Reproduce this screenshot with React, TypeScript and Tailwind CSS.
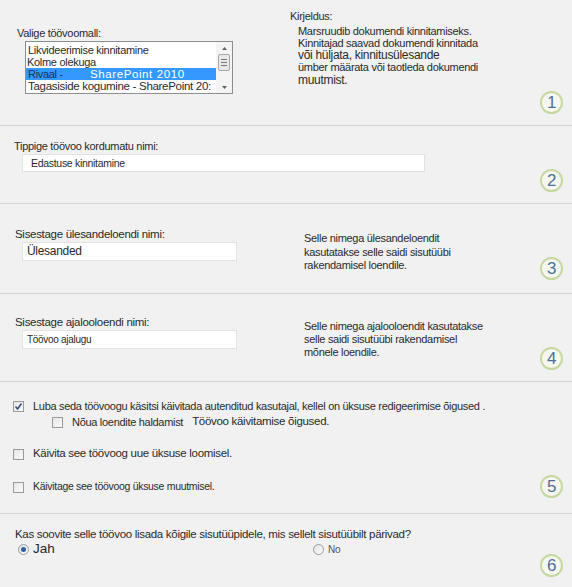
import React from 'react';

const font = { fontFamily: '"Liberation Sans", Arial, sans-serif' };

const Step: React.FC<{ n: number; pb: string }> = ({ n, pb }) => (
  <div className={`flex flex-col justify-end pr-[9px] ${pb}`}>
    <div className="w-[23px] h-[23px] rounded-full border-2 border-[#c6d79f] bg-[#f6f8f0] flex items-center justify-center text-[17px] leading-none text-[#4d6f9c]">
      {n}
    </div>
  </div>
);

const Box: React.FC<{ checked?: boolean }> = ({ checked }) => (
  <span className="w-[11px] h-[11px] border border-[#9a9a9a] bg-gradient-to-br from-[#e6e6e6] to-[#fafafa] flex items-center justify-center shrink-0">
    {checked && (
      <svg width="9" height="9" viewBox="0 0 9 9">
        <path d="M1.5 4.5 L3.6 7 L7.5 1.5" fill="none" stroke="#3a4f7a" strokeWidth="1.6" />
      </svg>
    )}
  </span>
);

const Radio: React.FC<{ on?: boolean }> = ({ on }) => (
  <span className="w-[11px] h-[11px] rounded-full border border-[#9a9a9a] bg-gradient-to-br from-[#e2e2e2] to-[#fbfbfb] flex items-center justify-center shrink-0">
    {on && <span className="w-[5px] h-[5px] rounded-full bg-[#2f5f9f]" />}
  </span>
);

export default function App() {
  return (
    <div className="w-[572px] h-[587px] bg-[#f1f1f1] text-[#2a2a2a] text-[11px] tracking-[-0.3px] flex flex-col overflow-hidden" style={font}>
      {/* 1 */}
      <div className="h-[126px] flex border-b border-[#d6d6d6] shrink-0">
        <div className="flex-1 flex">
          <div className="w-[290px] pl-[17px] pt-[27px]">
            <div className="leading-[13px]">Valige töövoomall:</div>
            <div className="ml-[8px] mt-[1px] w-[208px] h-[53px] border border-[#8a8f96] bg-white flex">
              <div className="flex-1 pt-[2px] leading-[12px] whitespace-nowrap overflow-hidden">
                <div className="pl-[2px]">Likvideerimise kinnitamine</div>
                <div className="pl-[1px]">Kolme olekuga</div>
                <div className="pl-[2px] bg-[#3399ff] text-[#1c2f55] flex h-[12px]">
                  <span className="w-[62px]">Rivaal -</span>
                  <span className="text-white tracking-[0.6px] text-[11.5px]">SharePoint 2010</span>
                </div>
                <div className="pl-[2px] text-[11.5px]">Tagasiside kogumine - SharePoint 20:</div>
              </div>
              <div className="w-[16px] bg-[#f4f4f4] flex flex-col items-center">
                <svg width="9" height="12" viewBox="0 0 9 12"><path d="M2 8 L4.5 5 L7 8Z" fill="#606060" /></svg>
                <div className="w-[12px] h-[17px] border border-[#a8a8a8] rounded-[2px] bg-[#e8e8e8] flex flex-col items-center justify-center gap-[2px]">
                  <span className="w-[6px] h-px bg-[#777]" />
                  <span className="w-[6px] h-px bg-[#777]" />
                  <span className="w-[6px] h-px bg-[#777]" />
                </div>
                <div className="flex-1" />
                <svg width="9" height="10" viewBox="0 0 9 10"><path d="M2 3 L4.5 6 L7 3Z" fill="#606060" /></svg>
              </div>
            </div>
          </div>
          <div className="pt-[10px] leading-[12px]">
            <div>Kirjeldus:</div>
            <div className="pl-[8px] pt-[3px]">
              <div className="leading-[12px]">Marsruudib dokumendi kinnitamiseks.</div>
              <div className="leading-[12px]">Kinnitajad saavad dokumendi kinnitada</div>
              <div className="leading-[12px] text-[12px]">või hüljata, kinnitusülesande</div>
              <div className="leading-[13px]">ümber määrata või taotleda dokumendi</div>
              <div className="leading-[13px] text-[12px]">muutmist.</div>
            </div>
          </div>
        </div>
        <Step n={1} pb="pb-[11px]" />
      </div>

      {/* 2 */}
      <div className="h-[78px] flex border-b border-[#d6d6d6] shrink-0">
        <div className="flex-1 pl-[14px] pt-[14px]">
          <div className="leading-[13px]">Tippige töövoo kordumatu nimi:</div>
          <div className="ml-[8px] mt-[1px] w-[403px] h-[18px] bg-white border border-[#e2e2e2] pl-[8px] text-[10.5px] leading-[16px]">
            Edastuse kinnitamine
          </div>
        </div>
        <Step n={2} pb="pb-[11px]" />
      </div>

      {/* 3 */}
      <div className="h-[90px] flex border-b border-[#d6d6d6] shrink-0">
        <div className="flex-1 flex">
          <div className="w-[304px] pl-[15px] pt-[24px]">
            <div className="leading-[13px] text-[11.5px]">Sisestage ülesandeloendi nimi:</div>
            <div className="ml-[7px] mt-[1px] w-[215px] h-[19px] bg-white border border-[#e2e2e2] pl-[4px] text-[12px] leading-[17px]">
              Ülesanded
            </div>
          </div>
          <div className="pt-[28px] leading-[13.5px]">
            <div>Selle nimega ülesandeloendit</div>
            <div>kasutatakse selle saidi sisutüübi</div>
            <div>rakendamisel loendile.</div>
          </div>
        </div>
        <Step n={3} pb="pb-[13px]" />
      </div>

      {/* 4 */}
      <div className="h-[88px] flex border-b border-[#d6d6d6] shrink-0">
        <div className="flex-1 flex">
          <div className="w-[304px] pl-[15px] pt-[22px]">
            <div className="leading-[13px] text-[11.5px]">Sisestage ajalooloendi nimi:</div>
            <div className="ml-[7px] mt-[1px] w-[215px] h-[19px] bg-white border border-[#e2e2e2] pl-[4px] text-[10px] leading-[17px]">
              Töövoo ajalugu
            </div>
          </div>
          <div className="pt-[26px] leading-[13px]">
            <div>Selle nimega ajalooloendit kasutatakse</div>
            <div>selle saidi sisutüübi rakendamisel</div>
            <div>mõnele loendile.</div>
          </div>
        </div>
        <Step n={4} pb="pb-[11px]" />
      </div>

      {/* 5 */}
      <div className="h-[132px] flex border-b border-[#d6d6d6] shrink-0">
        <div className="flex-1 pl-[13px] pt-[18px] flex flex-col">
          <div className="flex items-center gap-[9px] h-[12px]">
            <Box checked />
            <span>Luba seda töövoogu käsitsi käivitada autenditud kasutajal, kellel on üksuse redigeerimise õigused .</span>
          </div>
          <div className="flex items-center h-[12px] mt-[4px] pl-[39px]">
            <Box />
            <span className="ml-[9px]">Nõua loendite haldamist</span>
            <span className="ml-[9px] text-[11.5px]">Töövoo käivitamise õigused.</span>
          </div>
          <div className="flex items-center gap-[9px] h-[12px] mt-[20px]">
            <Box />
            <span className="text-[11.5px]">Käivita see töövoog uue üksuse loomisel.</span>
          </div>
          <div className="flex items-center gap-[9px] h-[12px] mt-[21px]">
            <Box />
            <span className="text-[10.5px]">Käivitage see töövoog üksuse muutmisel.</span>
          </div>
        </div>
        <Step n={5} pb="pb-[15px]" />
      </div>

      {/* 6 */}
      <div className="flex-1 flex">
        <div className="flex-1 pl-[15px] pt-[14px]">
          <div className="leading-[13px] text-[11.5px]">Kas soovite selle töövoo lisada kõigile sisutüüpidele, mis sellelt sisutüübilt pärivad?</div>
          <div className="flex items-center h-[17px]">
            <div className="w-[298px] flex items-center pl-[3px] gap-[4px]">
              <Radio on />
              <span className="text-[13.5px] tracking-normal">Jah</span>
            </div>
            <div className="flex items-center gap-[4px] text-[#555] text-[10px]">
              <Radio />
              <span>No</span>
            </div>
          </div>
        </div>
        <Step n={6} pb="pb-[10px]" />
      </div>
    </div>
  );
}
